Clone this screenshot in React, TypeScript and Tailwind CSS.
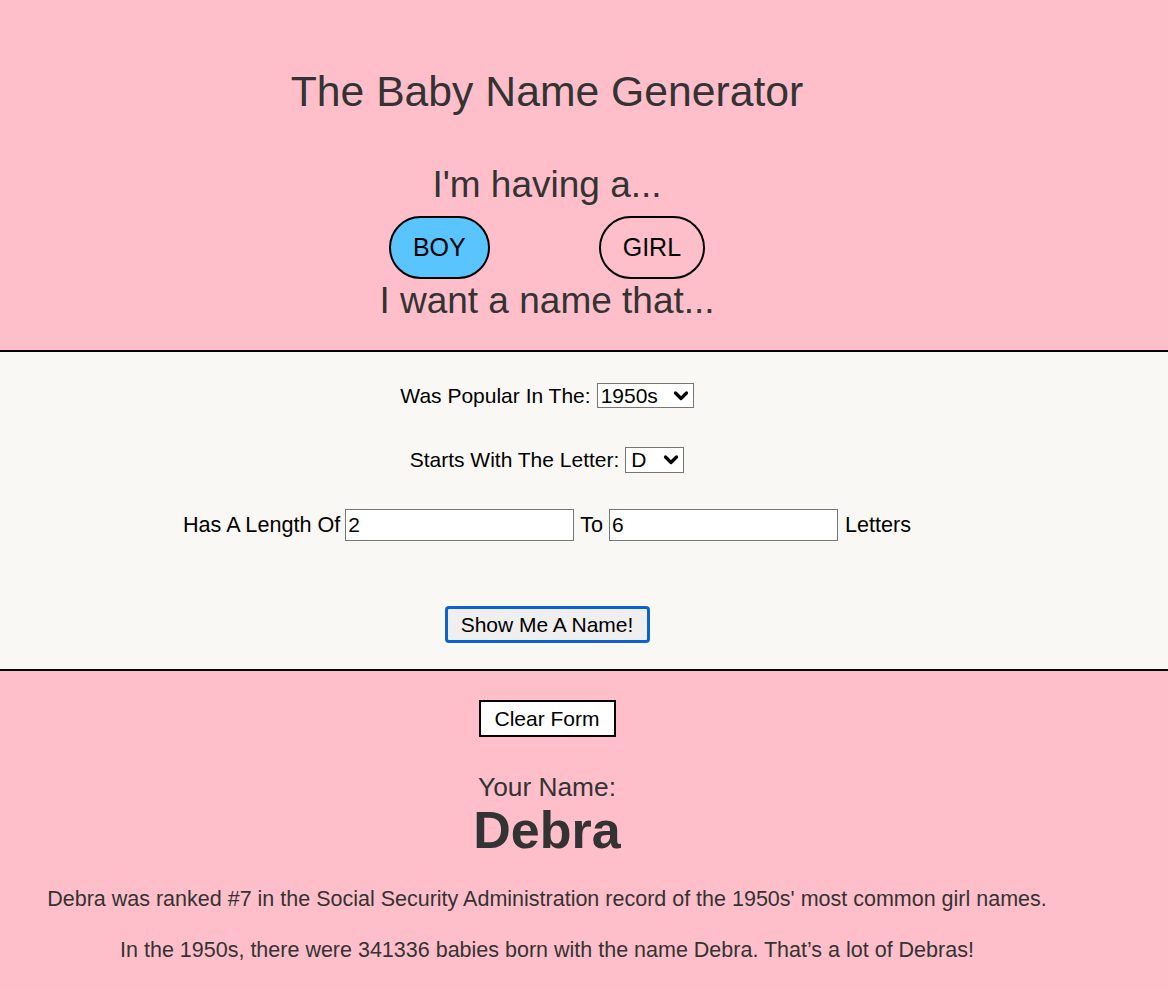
import { useState } from "react";

const font = { fontFamily: '"Liberation Sans", Arial, Helvetica, sans-serif' };

function Chevron() {
  return (
    <svg width="16" height="12" viewBox="0 0 16 12" className="pointer-events-none absolute right-[5px] top-1/2 -translate-y-1/2">
      <path d="M2.5 3 L8 8.5 L13.5 3" fill="none" stroke="#000" strokeWidth="3.2" strokeLinecap="round" strokeLinejoin="round" />
    </svg>
  );
}

export default function App() {
  const [sex, setSex] = useState<"boy" | "girl">("boy");
  const [decade, setDecade] = useState("1950s");
  const [letter, setLetter] = useState("D");
  const [minLen, setMinLen] = useState("2");
  const [maxLen, setMaxLen] = useState("6");

  return (
    <div className="min-h-[990px] bg-[#ffbfca] text-[#333333]" style={font}>
      <div className="border-b-2 border-black">
        <div className="w-[1094px] pt-[66px] pb-[27px] text-center">
          <h1 className="text-[42.7px] leading-[50px]">The Baby Name Generator</h1>
          <h2 className="mt-[47px] text-[37px] leading-[44px]">I'm having a...</h2>
          <div className="mt-[9px] flex justify-center gap-[109px]">
            <button
              onClick={() => setSex("boy")}
              className={`h-[63px] rounded-full border-2 border-black px-[22px] text-[25px] text-black ${sex === "boy" ? "bg-[#5ac4ff]" : "bg-transparent"}`}
            >
              BOY
            </button>
            <button
              onClick={() => setSex("girl")}
              className={`h-[63px] rounded-full border-2 border-black px-[22px] text-[25px] text-black ${sex === "girl" ? "bg-[#5ac4ff]" : "bg-transparent"}`}
            >
              GIRL
            </button>
          </div>
          <h2 className="text-[37px] leading-[44px]">I want a name that...</h2>
        </div>
      </div>

      <div className="border-b-2 border-black bg-[#faf8f4]">
        <div className="flex w-[1094px] flex-col items-center pt-[28px] pb-[26px] text-[21px] text-black">
          <div className="flex h-[32px] items-center gap-[6px]">
            <span>Was Popular In The:</span>
            <div className="relative">
              <select
                value={decade}
                onChange={(e) => setDecade(e.target.value)}
                className="h-[25px] w-[97px] appearance-none border border-[#767676] bg-white pl-[3px] text-[21px] leading-[23px] text-black outline-none"
              >
                {["1880s", "1900s", "1920s", "1950s", "1980s", "2000s"].map((d) => (
                  <option key={d}>{d}</option>
                ))}
              </select>
              <Chevron />
            </div>
          </div>
          <div className="mt-[32px] flex h-[32px] items-center gap-[6px]">
            <span>Starts With The Letter:</span>
            <div className="relative">
              <select
                value={letter}
                onChange={(e) => setLetter(e.target.value)}
                className="h-[26px] w-[59px] appearance-none border border-[#767676] bg-white pl-[5px] text-[21px] leading-[24px] text-black outline-none"
              >
                {"ABCDEFGHIJKLMNOPQRSTUVWXYZ".split("").map((l) => (
                  <option key={l}>{l}</option>
                ))}
              </select>
              <Chevron />
            </div>
          </div>
          <div className="mt-[33px] flex h-[32px] items-center text-[21.6px]">
            <span>Has A Length Of</span>
            <input
              value={minLen}
              onChange={(e) => setMinLen(e.target.value)}
              className="ml-[5px] h-[32px] w-[229px] border border-[#767676] bg-white px-[2px] text-[21px] text-black outline-none"
            />
            <span className="ml-[6px]">To</span>
            <input
              value={maxLen}
              onChange={(e) => setMaxLen(e.target.value)}
              className="ml-[6px] h-[32px] w-[229px] border border-[#767676] bg-white px-[2px] text-[21px] text-black outline-none"
            />
            <span className="ml-[7px]">Letters</span>
          </div>
          <button className="mt-[65px] h-[37px] w-[205px] rounded-[4px] border-[3px] border-[#0b62d0] bg-[#efefef] text-[21px] text-black">
            Show Me A Name!
          </button>
        </div>
      </div>

      <div className="flex w-[1094px] flex-col items-center pt-[29px] text-center">
        <button className="h-[37px] w-[137px] border-2 border-black bg-white text-[21px] text-black">Clear Form</button>
        <p className="mt-[35px] text-[26.3px] leading-[30px]">Your Name:</p>
        <p className="text-[52px] font-bold leading-[56px]">Debra</p>
        <p className="mt-[28px] text-[21.5px] leading-[26px]">
          Debra was ranked #7 in the Social Security Administration record of the 1950s' most common girl names.
        </p>
        <p className="mt-[25px] text-[21.5px] leading-[26px]">
          In the 1950s, there were 341336 babies born with the name Debra. That’s a lot of Debras!
        </p>
      </div>
    </div>
  );
}
